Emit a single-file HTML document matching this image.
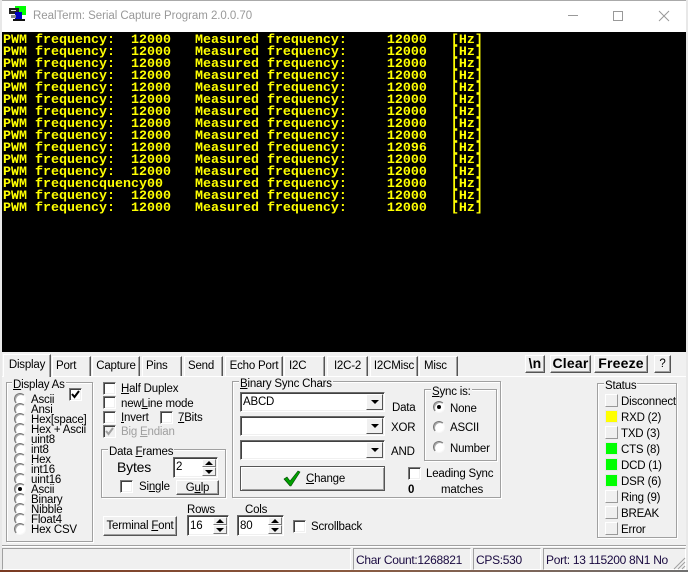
<!DOCTYPE html>
<html><head><meta charset="utf-8"><style>
html,body{margin:0;padding:0;width:688px;height:572px;overflow:hidden;background:#f0f0f0;font-family:"Liberation Sans",sans-serif;font-size:11.5px;letter-spacing:-.2px;color:#000}
div,span.a{position:absolute;box-sizing:border-box}
.t{position:absolute;white-space:pre;line-height:14px;height:14px;margin-top:1px}
#term{left:2px;top:32px;width:684px;height:320px;background:#000}
pre{position:absolute;left:1px;top:3px;margin:0;font:bold 13.33px/12px "Liberation Mono",monospace;letter-spacing:0;color:#ff0}
.g{border:1px solid #a0a0a0;box-shadow:1px 1px 0 #fff,inset 1px 1px 0 #fff}
.lg{position:absolute;background:#f0f0f0;white-space:pre;line-height:14px;padding:0 1px;margin-top:1px}
.c{width:13px;height:13px;background:#fff;border:1px solid;border-color:#7a7a7a #fff #fff #7a7a7a;box-shadow:inset 1px 1px 0 #404040,inset -1px -1px 0 #f0f0f0}
.r{width:12px;height:12px;border-radius:50%;background:#fff;border:1px solid;border-color:#777 #f8f8f8 #f8f8f8 #777;box-shadow:inset 1px 1px 0 #aaa}
.r i{position:absolute;left:3px;top:3px;width:4px;height:4px;border-radius:50%;background:#000}
.b{background:#f0f0f0;border:1px solid;border-color:#fff #555 #555 #fff;box-shadow:inset -1px -1px 0 #a0a0a0;text-align:center;white-space:pre;padding-top:1px}
.e{background:#fff;border:1px solid;border-color:#6a6a6a #fff #fff #6a6a6a;box-shadow:inset 1px 1px 0 #404040,inset -1px -1px 0 #f0f0f0}
.d{background:#f0f0f0;border:1px solid;border-color:#fff #555 #555 #fff}
.d:after{content:"";position:absolute;left:50%;top:50%;margin:-2px 0 0 -4px;border:4px solid transparent;border-top:4px solid #000;border-bottom:0}
.up:after{content:"";position:absolute;left:50%;top:50%;margin:-2px 0 0 -4px;border:4px solid transparent;border-bottom:4px solid #000;border-top:0}
.up{background:#f0f0f0;border:1px solid;border-color:#fff #777 #777 #fff}
.tab{top:356px;height:20px;border:1px solid;border-color:#fff #555 transparent #fff;border-bottom:0;box-shadow:inset -1px 0 0 #a0a0a0;line-height:17px;text-align:center;white-space:pre;padding-top:1px}
.ind{left:605px;width:13px;height:13px;border:1px solid;border-color:#fff #999 #999 #fff;background:#f0f0f0}
.on{background:#0f0;border-color:#e8e8e8}
.y{background:#ff0;border-color:#e8e8e8}
.bt{font:bold 14px/15px "Liberation Sans",sans-serif;letter-spacing:.2px;padding-top:0}
.sb{top:548px;height:22px;border:1px solid;border-color:#a0a0a0 #fff #fff #a0a0a0;line-height:23px;padding-left:2px;white-space:pre;color:#1a0a40;font-size:12px;letter-spacing:-.3px}
u{text-decoration:underline}
</style></head><body>

<div style="left:0;top:0;width:688px;height:32px;background:#fff;border-top:1px solid #aaa"></div>
<svg style="position:absolute;left:9px;top:6px" width="18" height="16"><rect x="6" y="0" width="11" height="9" fill="#0f0"/><rect x="0" y="2" width="10" height="6" fill="#222"/><rect x="2" y="4" width="5" height="1" fill="#ddd"/><rect x="6" y="6" width="7" height="7" fill="#0000c0"/><rect x="2" y="9" width="5" height="3" fill="#888"/><rect x="4" y="13" width="12" height="2" fill="#111"/></svg>
<div class="t" style="left:33px;top:8px;color:#999;font-size:11.5px;letter-spacing:-.05px">RealTerm: Serial Capture Program 2.0.0.70</div>
<svg style="position:absolute;left:560px;top:6px" width="120" height="20" fill="none" stroke="#999"><path d="M8 9.5H18"/><path d="M53.5 5.5h9v9h-9z" stroke-width="1"/><path d="M99 5l10 10M109 5l-10 10"/></svg>

<div id="term"><pre>PWM frequency:  12000   Measured frequency:     12000   [Hz]
PWM frequency:  12000   Measured frequency:     12000   [Hz]
PWM frequency:  12000   Measured frequency:     12000   [Hz]
PWM frequency:  12000   Measured frequency:     12000   [Hz]
PWM frequency:  12000   Measured frequency:     12000   [Hz]
PWM frequency:  12000   Measured frequency:     12000   [Hz]
PWM frequency:  12000   Measured frequency:     12000   [Hz]
PWM frequency:  12000   Measured frequency:     12000   [Hz]
PWM frequency:  12000   Measured frequency:     12000   [Hz]
PWM frequency:  12000   Measured frequency:     12096   [Hz]
PWM frequency:  12000   Measured frequency:     12000   [Hz]
PWM frequency:  12000   Measured frequency:     12000   [Hz]
PWM frequencquency00    Measured frequency:     12000   [Hz]
PWM frequency:  12000   Measured frequency:     12000   [Hz]
PWM frequency:  12000   Measured frequency:     12000   [Hz]</pre></div>

<div style="left:0;top:376px;width:688px;height:1px;background:#fff"></div>
<div class="tab" style="left:3px;top:354px;width:48px;height:23px;background:#f0f0f0;z-index:2;line-height:18px">Display</div>
<div class="tab" style="left:52px;width:39px;text-align:left;padding-left:3px">Port</div>
<div class="tab" style="left:92px;width:48px">Capture</div>
<div class="tab" style="left:142px;width:40px;text-align:left;padding-left:3px">Pins</div>
<div class="tab" style="left:184px;width:39px;text-align:left;padding-left:3px">Send</div>
<div class="tab" style="left:225px;width:58px">Echo Port</div>
<div class="tab" style="left:284px;width:41px;text-align:left;padding-left:4px">I2C</div>
<div class="tab" style="left:327px;width:41px">I2C-2</div>
<div class="tab" style="left:370px;width:48px">I2CMisc</div>
<div class="tab" style="left:419px;width:39px;text-align:left;padding-left:4px">Misc</div>

<div class="b bt" style="left:525px;top:355px;width:20px;height:18px">\n</div>
<div class="b bt" style="left:550px;top:355px;width:41px;height:18px">Clear</div>
<div class="b bt" style="left:594px;top:355px;width:54px;height:18px">Freeze</div>
<div class="b" style="left:654px;top:355px;width:17px;height:18px;line-height:15px">?</div>

<!-- Display As -->
<div class="g" style="left:6px;top:382px;width:87px;height:160px"></div>
<div class="lg" style="left:12px;top:377px"><u>D</u>isplay As</div>
<div class="c" style="left:69px;top:388px"></div>
<svg style="position:absolute;left:69px;top:388px" width="13" height="13" fill="none" stroke="#000" stroke-width="2"><path d="M3 6l2.5 3L10 3"/></svg>
<div class="r" style="left:14px;top:393px"></div><div class="t" style="left:31px;top:392px">Ascii</div>
<div class="r" style="left:14px;top:403px"></div><div class="t" style="left:31px;top:402px">Ansi</div>
<div class="r" style="left:14px;top:413px"></div><div class="t" style="left:31px;top:412px">Hex[space]</div>
<div class="r" style="left:14px;top:423px"></div><div class="t" style="left:31px;top:422px">Hex + Ascii</div>
<div class="r" style="left:14px;top:433px"></div><div class="t" style="left:31px;top:432px">uint8</div>
<div class="r" style="left:14px;top:443px"></div><div class="t" style="left:31px;top:442px">int8</div>
<div class="r" style="left:14px;top:453px"></div><div class="t" style="left:31px;top:452px">Hex</div>
<div class="r" style="left:14px;top:463px"></div><div class="t" style="left:31px;top:462px">int16</div>
<div class="r" style="left:14px;top:473px"></div><div class="t" style="left:31px;top:472px">uint16</div>
<div class="r" style="left:14px;top:483px"><i></i></div><div class="t" style="left:31px;top:482px">Ascii</div>
<div class="r" style="left:14px;top:493px"></div><div class="t" style="left:31px;top:492px">Binary</div>
<div class="r" style="left:14px;top:503px"></div><div class="t" style="left:31px;top:502px">Nibble</div>
<div class="r" style="left:14px;top:513px"></div><div class="t" style="left:31px;top:512px">Float4</div>
<div class="r" style="left:14px;top:523px"></div><div class="t" style="left:31px;top:522px">Hex CSV</div>

<!-- checks -->
<div class="c" style="left:103px;top:382px"></div><div class="t" style="left:121px;top:381px"><u>H</u>alf Duplex</div>
<div class="c" style="left:103px;top:396px"></div><div class="t" style="left:121px;top:396px">new<u>L</u>ine mode</div>
<div class="c" style="left:103px;top:411px"></div><div class="t" style="left:121px;top:410px"><u>I</u>nvert</div>
<div class="c" style="left:160px;top:411px"></div><div class="t" style="left:178px;top:410px"><u>7</u>Bits</div>
<div class="c" style="left:103px;top:425px;background:#f0f0f0"></div>
<svg style="position:absolute;left:103px;top:425px" width="13" height="13" fill="none" stroke="#a0a0a0" stroke-width="2"><path d="M3 6l2.5 3L10 3"/></svg>
<div class="t" style="left:121px;top:424px;color:#a0a0a0">Big <u>E</u>ndian</div>

<!-- Data Frames -->
<div class="g" style="left:101px;top:449px;width:125px;height:49px"></div>
<div class="lg" style="left:108px;top:444px">Data <u>F</u>rames</div>
<div class="t" style="left:117px;top:459px;font-size:14px">Bytes</div>
<div class="e" style="left:173px;top:457px;width:45px;height:21px;padding:2px 2px;line-height:15px">2</div>
<div class="up" style="left:202px;top:459px;width:14px;height:8px"></div><div class="d" style="left:202px;top:467px;width:14px;height:9px;border-color:#fff #777 #777 #fff"></div>
<div class="c" style="left:120px;top:480px"></div><div class="t" style="left:139px;top:479px">Si<u>n</u>gle</div>
<div class="b" style="left:176px;top:480px;width:43px;height:15px;line-height:14px;padding-top:0">G<u>u</u>lp</div>

<div class="b" style="left:103px;top:516px;width:74px;height:20px;line-height:17px">Terminal <u>F</u>ont</div>
<div class="t" style="left:187px;top:502px">Rows</div>
<div class="e" style="left:187px;top:515px;width:42px;height:21px;padding:2px 2px;line-height:16px">16</div>
<div class="up" style="left:213px;top:517px;width:14px;height:8px"></div><div class="d" style="left:213px;top:525px;width:14px;height:9px;border-color:#fff #777 #777 #fff"></div>
<div class="t" style="left:245px;top:502px">Cols</div>
<div class="e" style="left:237px;top:515px;width:47px;height:21px;padding:2px 2px;line-height:16px">80</div>
<div class="up" style="left:268px;top:517px;width:14px;height:8px"></div><div class="d" style="left:268px;top:525px;width:14px;height:9px;border-color:#fff #777 #777 #fff"></div>
<div class="c" style="left:293px;top:520px"></div><div class="t" style="left:311px;top:519px">Scrollback</div>

<!-- Binary Sync -->
<div class="g" style="left:232px;top:381px;width:269px;height:117px"></div>
<div class="lg" style="left:239px;top:376px"><u>B</u>inary Sync Chars</div>
<div class="e" style="left:240px;top:392px;width:145px;height:20px;padding:2px 2px;line-height:15px">ABCD</div><div class="d" style="left:366px;top:394px;width:17px;height:16px"></div>
<div class="e" style="left:240px;top:416px;width:145px;height:20px"></div><div class="d" style="left:366px;top:418px;width:17px;height:16px"></div>
<div class="e" style="left:240px;top:440px;width:145px;height:20px"></div><div class="d" style="left:366px;top:442px;width:17px;height:16px"></div>
<div class="t" style="left:392px;top:400px">Data</div>
<div class="t" style="left:391px;top:420px">XOR</div>
<div class="t" style="left:391px;top:444px">AND</div>
<div class="b" style="left:240px;top:466px;width:145px;height:25px;border-color:#555;box-shadow:inset 1px 1px 0 #fff,inset -1px -1px 0 #a0a0a0;line-height:23px;padding-left:26px"><u>C</u>hange</div>
<svg style="position:absolute;left:283px;top:470px" width="18" height="17"><path d="M1 9l3-2 3 4 8-10 2 1-9 14H7z" fill="#00a000" stroke="#004000" stroke-width=".6"/></svg>

<div class="g" style="left:424px;top:389px;width:73px;height:72px"></div>
<div class="lg" style="left:431px;top:384px"><u>S</u>ync is:</div>
<div class="r" style="left:433px;top:401px"><i></i></div><div class="t" style="left:450px;top:401px">None</div>
<div class="r" style="left:433px;top:421px"></div><div class="t" style="left:450px;top:420px">ASCII</div>
<div class="r" style="left:433px;top:441px"></div><div class="t" style="left:450px;top:441px">Number</div>
<div class="c" style="left:408px;top:467px"></div><div class="t" style="left:426px;top:466px">Leading Sync</div>
<div class="t" style="left:408px;top:482px;font-weight:bold">0</div>
<div class="t" style="left:441px;top:482px">matches</div>

<!-- Status -->
<div class="g" style="left:597px;top:383px;width:80px;height:155px"></div>
<div class="lg" style="left:604px;top:378px">Status</div>
<div class="ind" style="top:394px"></div><div class="t" style="left:621px;top:394px">Disconnect</div>
<div class="ind y" style="top:410px"></div><div class="t" style="left:621px;top:410px">RXD (2)</div>
<div class="ind" style="top:426px"></div><div class="t" style="left:621px;top:426px">TXD (3)</div>
<div class="ind on" style="top:442px"></div><div class="t" style="left:621px;top:442px">CTS (8)</div>
<div class="ind on" style="top:458px"></div><div class="t" style="left:621px;top:458px">DCD (1)</div>
<div class="ind on" style="top:474px"></div><div class="t" style="left:621px;top:474px">DSR (6)</div>
<div class="ind" style="top:490px"></div><div class="t" style="left:621px;top:490px">Ring (9)</div>
<div class="ind" style="top:506px"></div><div class="t" style="left:621px;top:506px">BREAK</div>
<div class="ind" style="top:522px"></div><div class="t" style="left:621px;top:522px">Error</div>

<!-- Status bar -->
<div style="left:0;top:545px;width:688px;height:1px;background:#a0a0a0"></div>
<div style="left:0;top:546px;width:688px;height:1px;background:#fff"></div>
<div class="sb" style="left:2px;width:349px"></div>
<div class="sb" style="left:353px;width:118px">Char Count:1268821</div>
<div class="sb" style="left:473px;width:68px">CPS:530</div>
<div class="sb" style="left:543px;width:143px">Port: 13 115200 8N1 No</div>
<svg style="position:absolute;left:672px;top:556px" width="14" height="14" stroke="#a0a0a0"><path d="M13 2L2 13M13 6L6 13M13 10L10 13"/></svg>
<div style="left:0;top:0;width:2px;height:570px;background:#e8e8e8"></div>
<div style="left:686px;top:0;width:2px;height:570px;background:#e8e8e8"></div>
<div style="left:0;top:570px;width:688px;height:2px;background:linear-gradient(90deg,#7a3a22,#8a5a40 50%,#707070)"></div>
</body></html>
